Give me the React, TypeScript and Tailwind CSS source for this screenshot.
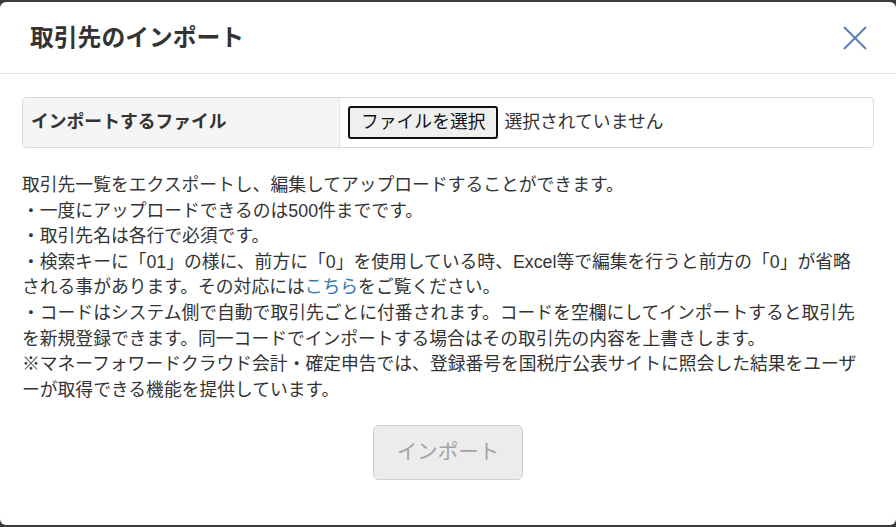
const font = { fontFamily: '"Liberation Sans", "Noto Sans CJK JP", sans-serif' };

export default function App() {
  return (
    <div className="h-[527px] bg-[#3b3b3b] pt-[2px]" style={font}>
      <div className="h-[523px] bg-white rounded-md flex flex-col text-[#333]">
        {/* ヘッダー */}
        <div className="h-[72px] shrink-0 border-b border-[#e5e5e5] flex items-center justify-between pl-[30px] pr-[29px]">
          <h2 className="text-[23.8px] font-bold leading-none">取引先のインポート</h2>
          <svg width="24" height="24" viewBox="0 0 24 24" className="text-[#5b7fb6]">
            <path d="M1 1L23 23M23 1L1 23" stroke="currentColor" strokeWidth="2" fill="none" />
          </svg>
        </div>

        {/* 本文 */}
        <div className="px-[22px] pt-[23px] flex flex-col">
          <div className="h-[51px] border border-[#d9d9d9] rounded-[4px] flex overflow-hidden">
            <div className="w-[317px] bg-[#f5f5f5] border-r border-[#e3e3e3] flex items-center pl-[8px] text-[17.8px] font-bold">
              インポートするファイル
            </div>
            <div className="flex items-center pl-[8px] gap-[6px] text-[17.8px]">
              <button className="h-[33px] px-[11px] border-2 border-[#111] rounded-[3px] bg-[#efefef] text-[#111] leading-none">
                ファイルを選択
              </button>
              <span className="text-[#333]">選択されていません</span>
            </div>
          </div>

          <div className="mt-[25px] text-[17.8px] leading-[25.6px] whitespace-nowrap">
            <div>取引先一覧をエクスポートし、編集してアップロードすることができます。</div>
            <div>・一度にアップロードできるのは500件までです。</div>
            <div>・取引先名は各行で必須です。</div>
            <div>・検索キーに「01」の様に、前方に「0」を使用している時、Excel等で編集を行うと前方の「0」が省略</div>
            <div>
              される事があります。その対応には<a className="text-[#337ab7]">こちら</a>をご覧ください。
            </div>
            <div>・コードはシステム側で自動で取引先ごとに付番されます。コードを空欄にしてインポートすると取引先</div>
            <div>を新規登録できます。同一コードでインポートする場合はその取引先の内容を上書きします。</div>
            <div>※マネーフォワードクラウド会計・確定申告では、登録番号を国税庁公表サイトに照会した結果をユーザ</div>
            <div>ーが取得できる機能を提供しています。</div>
          </div>

          <div className="mt-[22px] flex justify-center">
            <button
              disabled
              className="w-[150px] h-[55px] bg-[#ececec] border border-[#cfcfcf] rounded-md text-[20.5px] text-[#a3a3a3]"
            >
              インポート
            </button>
          </div>
        </div>
      </div>
    </div>
  );
}
